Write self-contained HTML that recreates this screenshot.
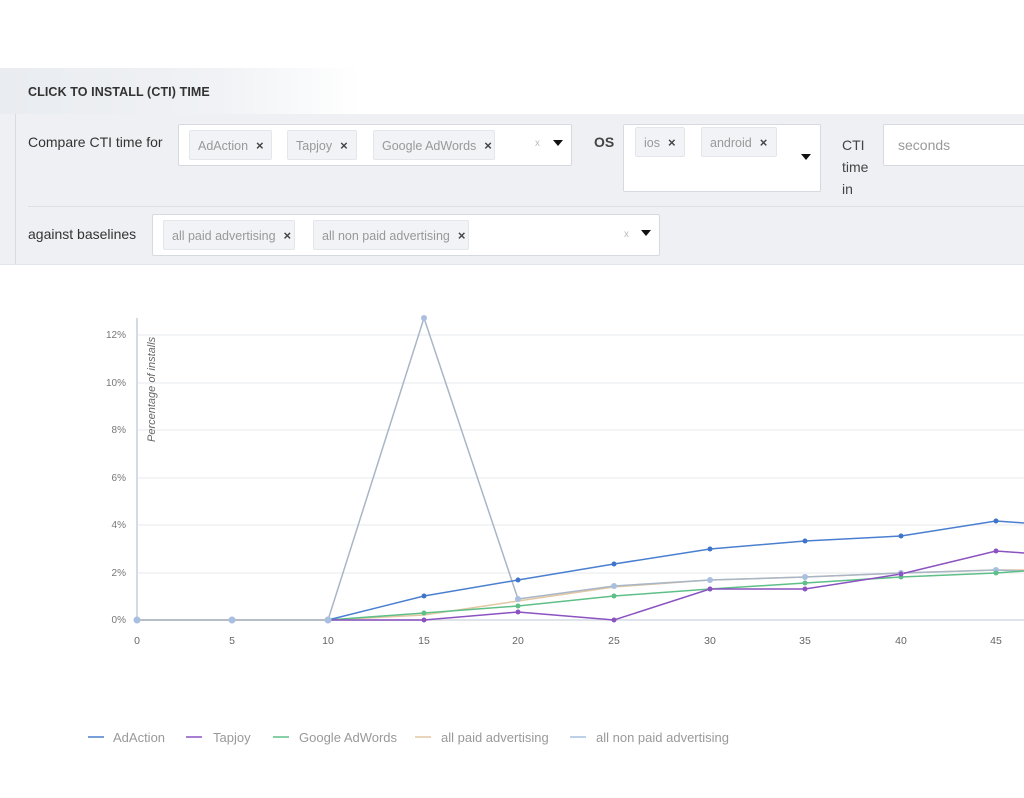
<!DOCTYPE html>
<html><head><meta charset="utf-8"><style>
*{box-sizing:border-box;margin:0;padding:0}
body{width:1024px;height:798px;background:#fff;font-family:"Liberation Sans",sans-serif;position:relative;overflow:hidden}
.tab{position:absolute;left:0;top:68px;width:360px;height:47px;background:linear-gradient(90deg,#e9ecf0 0%,#f0f2f5 60%,rgba(255,255,255,0) 100%);}
.tab span{position:absolute;left:28px;top:17px;font-size:12.5px;font-weight:bold;color:#333;letter-spacing:.1px}
.panel{position:absolute;left:0;top:114px;width:1024px;height:151px;background:#eef0f3;border-bottom:1px solid #e2e5ea}
.vl{position:absolute;left:15px;top:114px;width:1px;height:150px;background:#d8dce2}
.hl{position:absolute;left:28px;top:206px;width:996px;height:1px;background:#dde1e6}
.lbl{position:absolute;font-size:14px;color:#333}
.box{position:absolute;background:#fff;border:1px solid #d6dae0;border-radius:2px}
.tag{position:absolute;height:30px;background:#f1f3f6;border:1px solid #e3e6ea;border-radius:2px;font-size:12.5px;color:#999;padding:7px 8px;white-space:nowrap}
.tag b{color:#444;margin-left:8px;font-size:13px}
.arr{position:absolute;width:0;height:0;border-left:5px solid transparent;border-right:5px solid transparent;border-top:6px solid #111}
.sx{position:absolute;font-size:10px;color:#bbb}
</style></head><body>
<div class="tab"><span>CLICK TO INSTALL (CTI) TIME</span></div>
<div class="panel"></div>
<div class="vl"></div><div class="hl"></div>
<div class="lbl" style="left:28px;top:134px">Compare CTI time for</div>
<div class="box" style="left:178px;top:124px;width:394px;height:42px"></div>
<div class="tag" style="left:189px;top:130px;width:83px">AdAction<b>×</b></div>
<div class="tag" style="left:287px;top:130px;width:70px">Tapjoy<b>×</b></div>
<div class="tag" style="left:373px;top:130px;width:122px">Google AdWords<b>×</b></div>
<div class="sx" style="left:535px;top:138px">x</div>
<div class="arr" style="left:553px;top:140px"></div>
<div class="lbl" style="left:594px;top:134px;font-weight:bold;color:#444">OS</div>
<div class="box" style="left:623px;top:124px;width:198px;height:68px"></div>
<div class="tag" style="left:635px;top:127px;width:50px">ios<b>×</b></div>
<div class="tag" style="left:701px;top:127px;width:76px">android<b>×</b></div>
<div class="arr" style="left:801px;top:154px"></div>
<div class="lbl" style="left:842px;top:134px;line-height:22px;color:#444">CTI<br>time<br>in</div>
<div class="box" style="left:883px;top:124px;width:150px;height:42px"></div>
<div class="lbl" style="left:898px;top:137px;color:#999">seconds</div>
<div class="lbl" style="left:28px;top:226px">against baselines</div>
<div class="box" style="left:152px;top:214px;width:508px;height:42px"></div>
<div class="tag" style="left:163px;top:220px;width:132px">all paid advertising<b>×</b></div>
<div class="tag" style="left:313px;top:220px;width:156px">all non paid advertising<b>×</b></div>
<div class="sx" style="left:624px;top:229px">x</div>
<div class="arr" style="left:641px;top:230px"></div>

<svg style="position:absolute;left:0;top:0" width="1024" height="798" font-family="Liberation Sans,sans-serif">
<g stroke="#eef0f3" stroke-width="1.5">
<line x1="137" y1="335" x2="1024" y2="335"/><line x1="137" y1="383" x2="1024" y2="383"/><line x1="137" y1="430" x2="1024" y2="430"/><line x1="137" y1="478" x2="1024" y2="478"/><line x1="137" y1="525" x2="1024" y2="525"/><line x1="137" y1="573" x2="1024" y2="573"/>
</g>
<line x1="137" y1="620" x2="1024" y2="620" stroke="#dfe3ea" stroke-width="2"/>
<line x1="137" y1="318" x2="137" y2="620" stroke="#d4dbe6" stroke-width="2"/>
<g font-size="10" fill="#777" text-anchor="end">
<text x="126" y="338">12%</text><text x="126" y="386">10%</text><text x="126" y="433">8%</text><text x="126" y="481">6%</text><text x="126" y="528">4%</text><text x="126" y="576">2%</text><text x="126" y="623">0%</text>
</g>
<g font-size="10.5" fill="#666" text-anchor="middle">
<text x="137" y="644">0</text><text x="232" y="644">5</text><text x="328" y="644">10</text><text x="424" y="644">15</text><text x="518" y="644">20</text><text x="614" y="644">25</text><text x="710" y="644">30</text><text x="805" y="644">35</text><text x="901" y="644">40</text><text x="996" y="644">45</text>
</g>
<text transform="translate(155,442) rotate(-90)" font-size="11" font-style="italic" fill="#666">Percentage of installs</text>
<polyline fill="none" stroke="#e3c7a3" stroke-width="1.5" points="137,620 328,620 424,615 518,601 614,587 710,580 805,577 901,573 996,570 1024,570"/>
<polyline fill="none" stroke="#a9b6c6" stroke-width="1.5" points="137,620 232,620 328,620 424,318 518,599 614,586 710,580 805,577 901,573 996,570 1024,571"/>
<polyline fill="none" stroke="#5fbf88" stroke-width="1.5" points="328,620 424,613 518,606 614,596 710,589 805,583 901,577 996,573 1024,571"/>
<polyline fill="none" stroke="#8b52c1" stroke-width="1.5" points="328,620 424,620 518,612 614,620 710,589 805,589 901,574 996,551 1024,553"/>
<polyline fill="none" stroke="#4a7fd0" stroke-width="1.5" points="328,620 424,596 518,580 614,564 710,549 805,541 901,536 996,521 1024,523"/>
<g fill="#a9bfe0"><circle cx="137" cy="620" r="3.5"/><circle cx="232" cy="620" r="3.5"/><circle cx="328" cy="620" r="3.5"/><circle cx="424" cy="318" r="3"/><circle cx="518" cy="599" r="3"/><circle cx="614" cy="586" r="3"/><circle cx="710" cy="580" r="3"/><circle cx="805" cy="577" r="3"/><circle cx="901" cy="573" r="3"/><circle cx="996" cy="570" r="3"/></g>
<g fill="#5fbf88"><circle cx="424" cy="613" r="2.5"/><circle cx="518" cy="606" r="2.5"/><circle cx="614" cy="596" r="2.5"/><circle cx="710" cy="589" r="2.5"/><circle cx="805" cy="583" r="2.5"/><circle cx="901" cy="577" r="2.5"/><circle cx="996" cy="573" r="2.5"/></g>
<g fill="#8b52c1"><circle cx="424" cy="620" r="2.5"/><circle cx="518" cy="612" r="2.5"/><circle cx="614" cy="620" r="2.5"/><circle cx="710" cy="589" r="2.5"/><circle cx="805" cy="589" r="2.5"/><circle cx="901" cy="574" r="2.5"/><circle cx="996" cy="551" r="2.5"/></g>
<g fill="#3f74c9"><circle cx="424" cy="596" r="2.5"/><circle cx="518" cy="580" r="2.5"/><circle cx="614" cy="564" r="2.5"/><circle cx="710" cy="549" r="2.5"/><circle cx="805" cy="541" r="2.5"/><circle cx="901" cy="536" r="2.5"/><circle cx="996" cy="521" r="2.5"/></g>
<g font-size="13" fill="#999">
<line x1="88" y1="737" x2="104" y2="737" stroke="#4a7fd0" stroke-width="1.5"/><text x="113" y="742">AdAction</text>
<line x1="186" y1="737" x2="202" y2="737" stroke="#8b52c1" stroke-width="1.5"/><text x="213" y="742">Tapjoy</text>
<line x1="273" y1="737" x2="289" y2="737" stroke="#5fbf88" stroke-width="1.5"/><text x="299" y="742">Google AdWords</text>
<line x1="415" y1="737" x2="431" y2="737" stroke="#e3c7a3" stroke-width="1.5"/><text x="441" y="742">all paid advertising</text>
<line x1="570" y1="737" x2="586" y2="737" stroke="#a9bfe0" stroke-width="1.5"/><text x="596" y="742">all non paid advertising</text>
</g>
</svg>
</body></html>
